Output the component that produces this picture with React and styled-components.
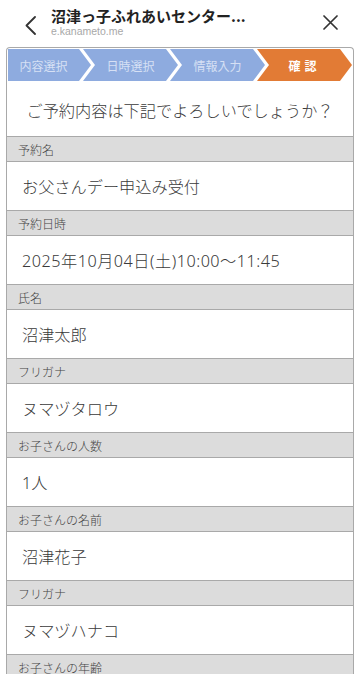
import React from "react";
import styled, { createGlobalStyle } from "styled-components";

const Global = createGlobalStyle`
  html, body { margin: 0; padding: 0; background: #fff; }
  body { font-family: "Noto Sans CJK JP", "Noto Sans", sans-serif; color: #333; }
`;

const Page = styled.div`
  width: 360px;
  height: 674px;
  overflow: hidden;
`;

const Header = styled.header`
  height: 47px;
  display: flex;
  align-items: center;
  padding: 0 22px 0 24px;
  box-sizing: border-box;
`;

const IconButton = styled.div`
  display: flex;
  align-items: center;
  justify-content: center;
  width: ${(p) => p.$w}px;
  height: 20px;
  margin-top: ${(p) => p.$mt || 0}px;
`;

const TitleBlock = styled.div`
  flex: 1;
  display: flex;
  flex-direction: column;
  margin-left: 15px;
  margin-top: -3px;
`;

const Title = styled.div`
  font-size: 15px;
  font-weight: 700;
  color: #222;
  line-height: 19px;
  white-space: nowrap;
`;

const Subtitle = styled.div`
  font-family: "Liberation Sans", Arial, sans-serif;
  font-size: 10.5px;
  color: #a8a8a8;
  line-height: 13px;
`;

const Card = styled.section`
  margin: 0 6px;
  border: 1px solid #a9a9a9;
  border-bottom: none;
  border-radius: 4px 4px 0 0;
  min-height: 640px;
`;

const StepBar = styled.div`
  display: flex;
  height: 32px;
  margin: 1px 1px 0 1px;
`;

const Step = styled.div`
  flex: 1;
  margin-left: ${(p) => (p.$first ? 0 : -8)}px;
  background: ${(p) => (p.$active ? "#e27b35" : "#8eabdf")};
  color: ${(p) => (p.$active ? "#fff" : "#d6e0f4")};
  font-size: 12px;
  font-weight: ${(p) => (p.$active ? 700 : 400)};
  letter-spacing: ${(p) => (p.$active ? "4px" : "0")};
  display: flex;
  align-items: center;
  justify-content: center;
  padding: 0 12px 0 ${(p) => (p.$first ? 0 : 12)}px;
  clip-path: ${(p) =>
    p.$first
      ? "polygon(0 0, calc(100% - 12px) 0, 100% 50%, calc(100% - 12px) 100%, 0 100%)"
      : "polygon(0 0, calc(100% - 12px) 0, 100% 50%, calc(100% - 12px) 100%, 0 100%, 12px 50%)"};
`;

const Question = styled.div`
  height: 55px;
  display: flex;
  align-items: center;
  justify-content: center;
  padding-top: 2px;
  box-sizing: border-box;
  font-size: 16.2px;
  font-weight: 300;
  color: #3a3a3a;
`;

const Label = styled.div`
  border-top: 1px solid #a9a9a9;
  background: #dcdcdc;
  height: 24px;
  display: flex;
  align-items: center;
  padding-left: 11px;
  font-size: 12px;
  font-weight: 300;
  color: #444;
`;

const Value = styled.div`
  border-top: 1px solid #a9a9a9;
  height: 48px;
  display: flex;
  align-items: center;
  padding-left: 15px;
  font-family: "Noto Sans", "Noto Sans CJK JP", sans-serif;
  font-size: 16.2px;
  font-weight: 300;
  letter-spacing: ${(p) => (p.$wide ? "0.5px" : "0")};
  color: #3a3a3a;
`;

const rows = [
  ["予約名", "お父さんデー申込み受付"],
  ["予約日時", "2025年10月04日(土)10:00〜11:45", true],
  ["氏名", "沼津太郎"],
  ["フリガナ", "ヌマヅタロウ"],
  ["お子さんの人数", "1人"],
  ["お子さんの名前", "沼津花子"],
  ["フリガナ", "ヌマヅハナコ"],
  ["お子さんの年齢", "2歳"],
];

export default function App() {
  return (
    <Page>
      <Global />
      <Header>
        <IconButton $w={12} $mt={4}>
          <svg width="11" height="19" viewBox="0 0 11 19" fill="none">
            <path d="M10 1 L1.5 9.5 L10 18" stroke="#333" strokeWidth="1.8" strokeLinecap="round" strokeLinejoin="round" />
          </svg>
        </IconButton>
        <TitleBlock>
          <Title>沼津っ子ふれあいセンター...</Title>
          <Subtitle>e.kanameto.me</Subtitle>
        </TitleBlock>
        <IconButton $w={16} $mt={-2}>
          <svg width="15" height="15" viewBox="0 0 15 15" fill="none">
            <path d="M1 1 L14 14 M14 1 L1 14" stroke="#333" strokeWidth="1.7" strokeLinecap="round" />
          </svg>
        </IconButton>
      </Header>
      <Card>
        <StepBar>
          <Step $first>内容選択</Step>
          <Step>日時選択</Step>
          <Step>情報入力</Step>
          <Step $active>確認</Step>
        </StepBar>
        <Question>ご予約内容は下記でよろしいでしょうか？</Question>
        {rows.map(([label, value, wide], i) => (
          <React.Fragment key={i}>
            <Label>{label}</Label>
            <Value $wide={wide}>{value}</Value>
          </React.Fragment>
        ))}
      </Card>
    </Page>
  );
}
